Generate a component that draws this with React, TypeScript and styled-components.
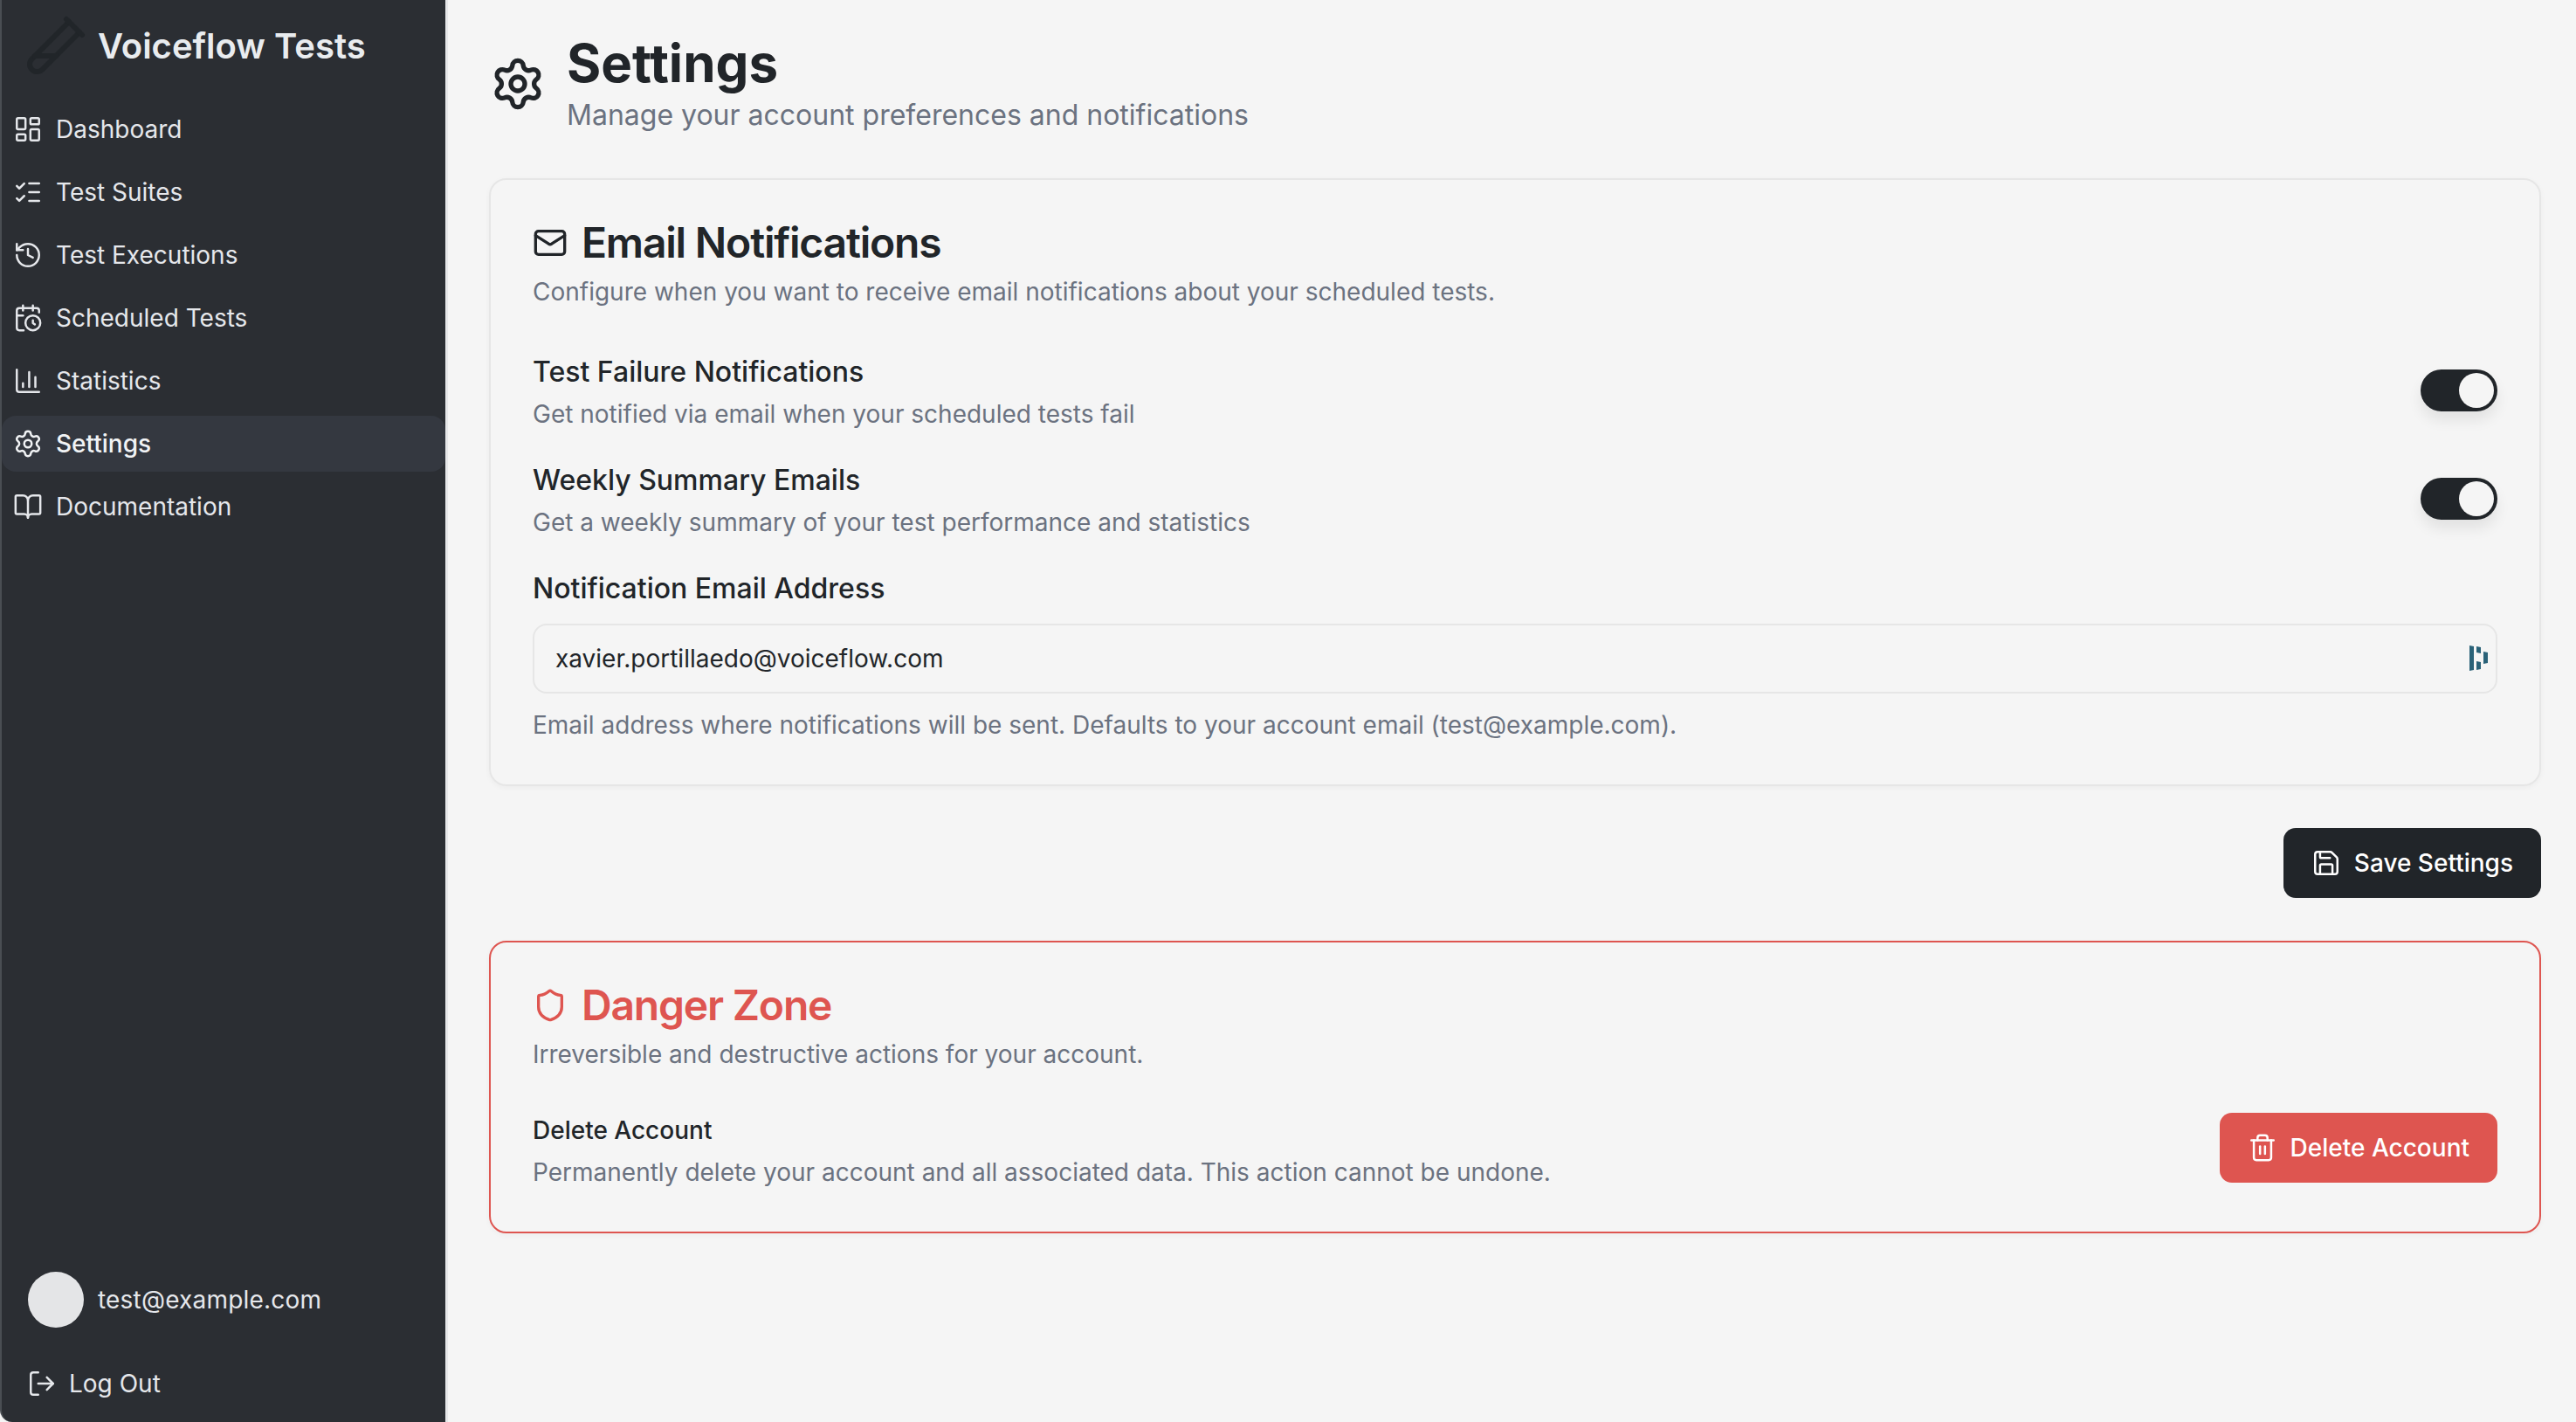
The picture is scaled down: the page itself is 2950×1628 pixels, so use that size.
import React from 'react'
import styled, { createGlobalStyle } from 'styled-components'
import {
  LayoutDashboard, ListChecks, History, CalendarClock, ChartColumn, Settings, BookOpen,
  LogOut, TestTubeDiagonal, Mail, Shield, Save, Trash2,
} from 'lucide-react'

const GlobalStyle = createGlobalStyle`
  html, body { margin: 0; padding: 0; background: #000; }
  * { box-sizing: border-box; }
  body { font-family: Inter, "Noto Sans", sans-serif; }
`

const Shell = styled.div`
  display: flex;
  width: 2950px;
  height: 1628px;
  overflow: hidden;
  background: #f5f5f5;
`

const Sidebar = styled.aside`
  flex: 0 0 513px;
  display: flex;
  flex-direction: column;
  background: #2b2e33;
  border-left: 2px solid #4a4e53;
  border-right: 3px solid #e6e7e9;
  border-bottom-left-radius: 14px;
  color: #e5e7eb;
`

const Brand = styled.div`
  display: flex;
  align-items: center;
  gap: 12px;
  height: 104px;
  padding: 0 0 0 26px;
  margin-bottom: 12px;
  font-size: 40px;
  font-weight: 600;
  color: #e9ecef;
  svg { color: #212529; }
`

const Nav = styled.nav`
  display: flex;
  flex-direction: column;
  gap: 8px;
`

const NavItem = styled.a<{ $active?: boolean }>`
  display: flex;
  align-items: center;
  gap: 15px;
  height: 64px;
  padding: 0 13px;
  border-radius: 16px;
  font-size: 28px;
  font-weight: ${p => (p.$active ? 500 : 400)};
  color: ${p => (p.$active ? '#f1f3f5' : '#e5e7eb')};
  background: ${p => (p.$active ? '#343840' : 'transparent')};
`

const SideFooter = styled.div`
  margin-top: auto;
  display: flex;
  flex-direction: column;
  padding: 0 0 20px 29px;
`

const UserRow = styled.div`
  display: flex;
  align-items: center;
  gap: 16px;
  padding-left: 1px;
  font-size: 28px;
  letter-spacing: 0.2px;
  margin-bottom: 40px;
`

const Avatar = styled.div`
  width: 64px;
  height: 64px;
  border-radius: 50%;
  background: #e4e5e7;
`

const LogoutRow = styled.a`
  display: flex;
  align-items: center;
  gap: 14px;
  height: 48px;
  font-size: 28px;
`

const Main = styled.main`
  flex: 1;
  min-width: 0;
  padding: 36px 40px 0 47px;
`

const PageHeader = styled.header`
  display: flex;
  align-items: center;
  gap: 24px;
  padding-left: 1px;
  margin-bottom: 48px;
`

const PageTitle = styled.h1`
  margin: 0;
  font-size: 60px;
  line-height: 72px;
  font-weight: 700;
  color: #212529;
`

const PageSub = styled.p`
  margin: 0;
  font-size: 32px;
  line-height: 48px;
  color: #6b7280;
`

const Card = styled.section<{ $danger?: boolean }>`
  border: 2px solid ${p => (p.$danger ? '#de5550' : '#e6e6e6')};
  border-radius: 20px;
  padding: 48px;
  box-shadow: 0 2px 6px rgba(0, 0, 0, 0.04);
`

const CardTitle = styled.h2<{ $danger?: boolean }>`
  display: flex;
  align-items: center;
  gap: 16px;
  margin: 0;
  font-size: 48px;
  line-height: 48px;
  font-weight: 600;
  letter-spacing: -1.2px;
  color: ${p => (p.$danger ? '#de5550' : '#212529')};
`

const CardDesc = styled.p`
  margin: 12px 0 0;
  font-size: 28px;
  line-height: 40px;
  color: #6b7280;
`

const CardBody = styled.div`
  display: flex;
  flex-direction: column;
  gap: 32px;
  margin-top: 48px;
`

const SettingRow = styled.div`
  display: flex;
  align-items: center;
  justify-content: space-between;
`

const SettingLabel = styled.div`
  font-size: 32px;
  line-height: 48px;
  font-weight: 500;
  color: #212529;
`

const SettingHint = styled.div`
  margin-top: 4px;
  font-size: 28px;
  line-height: 40px;
  color: #6b7280;
`

const Toggle = styled.div`
  width: 88px;
  height: 48px;
  margin-bottom: 2px;
  display: flex;
  justify-content: flex-end;
  align-items: center;
  padding-right: 4px;
  border-radius: 24px;
  background: #212529;
  box-shadow: 0 10px 16px rgba(0, 0, 0, 0.08);
`

const ToggleThumb = styled.span`
  width: 40px;
  height: 40px;
  border-radius: 50%;
  background: #f5f5f5;
`

const EmailField = styled.div`
  position: relative;
  margin-top: 16px;
`

const EmailInput = styled.input`
  display: block;
  width: 100%;
  height: 80px;
  padding: 0 24px;
  border: 2px solid #e6e6e6;
  border-radius: 16px;
  background: transparent;
  font-family: inherit;
  font-size: 28px;
  color: #212529;
  outline: none;
`

const FieldBadge = styled.svg`
  position: absolute;
  right: 11px;
  top: 25px;
`

const FieldHint = styled.div`
  margin-top: 16px;
  font-size: 28px;
  line-height: 40px;
  color: #6b7280;
`

const Actions = styled.div`
  display: flex;
  justify-content: flex-end;
  margin: 48px 0 49px;
`

const Button = styled.button<{ $danger?: boolean }>`
  display: flex;
  align-items: center;
  gap: 15px;
  height: 80px;
  padding: 0 32px;
  border: 0;
  border-radius: 14px;
  font-family: inherit;
  font-size: 28px;
  font-weight: 500;
  color: #fff;
  background: ${p => (p.$danger ? '#de5550' : '#212529')};
`

const DangerRow = styled.div`
  display: flex;
  align-items: flex-start;
  justify-content: space-between;
  margin-top: 47px;
`

const DangerLabel = styled.div`
  font-size: 28px;
  line-height: 40px;
  font-weight: 500;
  color: #212529;
`

const DangerHint = styled.div`
  margin-top: 8px;
  font-size: 28px;
  line-height: 40px;
  color: #6b7280;
`

const navItems = [
  { label: 'Dashboard', icon: LayoutDashboard },
  { label: 'Test Suites', icon: ListChecks },
  { label: 'Test Executions', icon: History },
  { label: 'Scheduled Tests', icon: CalendarClock },
  { label: 'Statistics', icon: ChartColumn },
  { label: 'Settings', icon: Settings, active: true },
  { label: 'Documentation', icon: BookOpen },
]

export default function App() {
  return (
    <>
      <GlobalStyle />
      <Shell>
        <Sidebar>
          <Brand>
            <TestTubeDiagonal size={72} strokeWidth={2} />
            Voiceflow Tests
          </Brand>
          <Nav>
            {navItems.map(({ label, icon: Icon, active }) => (
              <NavItem key={label} $active={active}>
                <Icon size={34} strokeWidth={1.75} />
                {label}
              </NavItem>
            ))}
          </Nav>
          <SideFooter>
            <UserRow>
              <Avatar />
              test@example.com
            </UserRow>
            <LogoutRow>
              <LogOut size={34} strokeWidth={1.75} />
              Log Out
            </LogoutRow>
          </SideFooter>
        </Sidebar>
        <Main>
          <PageHeader>
            <Settings size={64} strokeWidth={2} color="#212529" />
            <div>
              <PageTitle>Settings</PageTitle>
              <PageSub>Manage your account preferences and notifications</PageSub>
            </div>
          </PageHeader>

          <Card>
            <CardTitle>
              <Mail size={40} strokeWidth={2} />
              Email Notifications
            </CardTitle>
            <CardDesc>Configure when you want to receive email notifications about your scheduled tests.</CardDesc>
            <CardBody>
              <SettingRow>
                <div>
                  <SettingLabel>Test Failure Notifications</SettingLabel>
                  <SettingHint>Get notified via email when your scheduled tests fail</SettingHint>
                </div>
                <Toggle><ToggleThumb /></Toggle>
              </SettingRow>
              <SettingRow>
                <div>
                  <SettingLabel>Weekly Summary Emails</SettingLabel>
                  <SettingHint>Get a weekly summary of your test performance and statistics</SettingHint>
                </div>
                <Toggle><ToggleThumb /></Toggle>
              </SettingRow>
              <div>
                <SettingLabel>Notification Email Address</SettingLabel>
                <EmailField>
                  <EmailInput readOnly value="xavier.portillaedo@voiceflow.com" />
                  <FieldBadge width="21" height="29" viewBox="0 0 21 29" fill="#2a6278">
                    <path d="M0 0l5 1v27l-5 1z" />
                    <path d="M8 1l5 1v7l-5-1zM8 18l5 1v8l-5 1z" />
                    <path d="M16 7l5 1v12l-5 1z" />
                  </FieldBadge>
                </EmailField>
                <FieldHint>Email address where notifications will be sent. Defaults to your account email (test@example.com).</FieldHint>
              </div>
            </CardBody>
          </Card>

          <Actions>
            <Button>
              <Save size={34} strokeWidth={1.75} />
              Save Settings
            </Button>
          </Actions>

          <Card $danger>
            <CardTitle $danger>
              <Shield size={40} strokeWidth={2} />
              Danger Zone
            </CardTitle>
            <CardDesc>Irreversible and destructive actions for your account.</CardDesc>
            <DangerRow>
              <div>
                <DangerLabel>Delete Account</DangerLabel>
                <DangerHint>Permanently delete your account and all associated data. This action cannot be undone.</DangerHint>
              </div>
              <Button $danger>
                <Trash2 size={34} strokeWidth={1.75} />
                Delete Account
              </Button>
            </DangerRow>
          </Card>
        </Main>
      </Shell>
    </>
  )
}
